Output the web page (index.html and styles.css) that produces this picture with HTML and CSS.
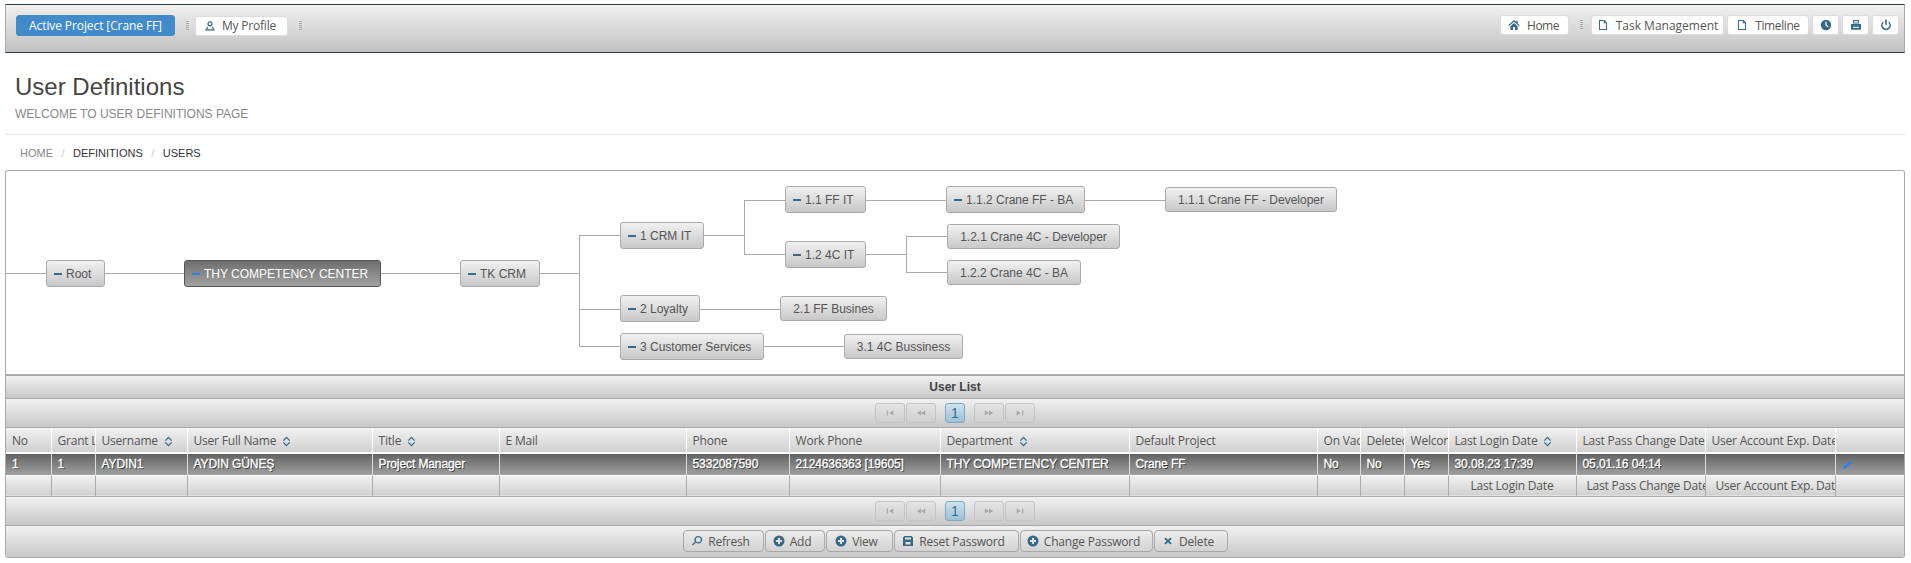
FILE: index.html
```html
<!DOCTYPE html>
<html lang="en">
<head>
    <meta charset="UTF-8">
    <meta name="viewport" content="width=device-width, initial-scale=1.0">
    <title>User Definitions</title>
    <link rel="stylesheet" href="styles.css">
</head>
<body>
    <svg class="icon-defs" aria-hidden="true">
        <symbol id="i-user" viewBox="0 0 12 12"><path d="M6 1.200a2.600 2.600 0 1 1 0 5.200 2.600 2.600 0 0 1 0-5.200zm0 1.200a1.400 1.400 0 1 0 0 2.800 1.400 1.400 0 0 0 0-2.800zM3.400 6.600 1 10.400h10L8.600 6.600l-.9.7 1.100 1.900H3.200l1.100-1.900z"/></symbol>
        <symbol id="i-home" viewBox="0 0 12 12"><path d="M6 1 .3 6.200l.8.800L6 2.800l4.900 4.200.8-.800-2-1.800V1.800H8.300v1.200zM2.400 7.200V11h2.700V8h1.800v3h2.700V7.200L6 4z"/></symbol>
        <symbol id="i-file" viewBox="0 0 12 12"><path d="M2 1h5.500L10 3.500V11H2zm1 1v8h6V4.200H6.800V2z" fill-rule="evenodd"/></symbol>
        <symbol id="i-clock" viewBox="0 0 12 12"><path d="M6 .8a5.200 5.200 0 1 1 0 10.400A5.200 5.200 0 0 1 6 .8zM5.400 2.800v3.500l2.400 2 .8-.900-2-1.700V2.800z" fill-rule="evenodd"/></symbol>
        <symbol id="i-print" viewBox="0 0 12 12"><path d="M3 1h6v3.400H3zm1 1v1.400h4V2zM1 5h10v5.800H1zm2 2.800v1h6v-1z" fill-rule="evenodd"/></symbol>
        <symbol id="i-power" viewBox="0 0 12 12"><path d="M5.200.6h1.600v5.200H5.200zM3.400 2.200v1.700a3.400 3.400 0 1 0 5.200 0V2.200a4.900 4.900 0 1 1-5.200 0z"/></symbol>
        <symbol id="i-plus" viewBox="0 0 12 12"><path d="M6 .5a5.500 5.500 0 1 1 0 11 5.500 5.500 0 0 1 0-11zM5 3v2H3v2h2v2h2V7h2V5H7V3z" fill-rule="evenodd"/></symbol>
        <symbol id="i-search" viewBox="0 0 12 12"><path d="M7.300 1a3.800 3.800 0 1 1-2.500 6.600L2 10.500 1 9.600l2.900-2.900A3.800 3.800 0 0 1 7.300 1zm0 1.300a2.500 2.500 0 1 0 0 5 2.500 2.500 0 0 0 0-5z" fill-rule="evenodd"/></symbol>
        <symbol id="i-save" viewBox="0 0 12 12"><path d="M2.500 1h7L11 2.500V11H1V2.500zM3 2.500v2h6v-2zM3.500 7v2.500h5V7z" fill-rule="evenodd"/></symbol>
        <symbol id="i-close" viewBox="0 0 12 12"><path d="M3.600 2.400 6 4.700l2.400-2.300 1.300 1.300L7.300 6l2.400 2.300-1.300 1.300L6 7.300 3.600 9.600 2.300 8.300 4.700 6 2.300 3.700z"/></symbol>
        <symbol id="i-sort" viewBox="0 0 10 12"><path d="M5 .5 9 4.500 8 5.500 5 2.500 2 5.500 1 4.500zM5 11.500 1 7.500 2 6.500 5 9.500 8 6.500 9 7.500z"/></symbol>
        <symbol id="i-pencil" viewBox="0 0 12 12"><path d="M8.500 1.500l2 2-6.800 6.800-2.800.8.800-2.800z"/></symbol>
        <symbol id="i-first" viewBox="0 0 12 12"><path d="M2 3h1.500v6H2zM10 3v6L5 6z"/></symbol>
        <symbol id="i-prev" viewBox="0 0 12 12"><path d="M6 3v6L1 6zM11 3v6L6 6z"/></symbol>
        <symbol id="i-next" viewBox="0 0 12 12"><path d="M1 3l5 3-5 3zM6 3l5 3-5 3z"/></symbol>
        <symbol id="i-last" viewBox="0 0 12 12"><path d="M2 3l5 3-5 3zM8.500 3H10v6H8.500z"/></symbol>
    </svg>

    <header class="topbar">
        <div class="topbar-group">
            <a class="tb-btn tb-active">Active Project [Crane FF]</a>
            <span class="handle"></span>
            <a class="tb-btn tb-profile"><svg class="icon"><use href="#i-user"/></svg>My Profile</a>
            <span class="handle"></span>
        </div>
        <div class="topbar-group">
            <a class="tb-btn tb-home"><svg class="icon"><use href="#i-home"/></svg>Home</a>
            <span class="handle"></span>
            <a class="tb-btn tb-task"><svg class="icon"><use href="#i-file"/></svg>Task Management</a>
            <a class="tb-btn tb-timeline"><svg class="icon"><use href="#i-file"/></svg>Timeline</a>
            <a class="tb-btn tb-square"><svg class="icon"><use href="#i-clock"/></svg></a>
            <a class="tb-btn tb-square"><svg class="icon"><use href="#i-print"/></svg></a>
            <a class="tb-btn tb-square"><svg class="icon"><use href="#i-power"/></svg></a>
        </div>
    </header>

    <section class="page-head">
        <h1>User Definitions</h1>
        <p>Welcome to User Definitions Page</p>
    </section>

    <nav class="crumbs">
        <span class="crumb-home">HOME</span><i>/</i><span>DEFINITIONS</span><i>/</i><span>USERS</span>
    </nav>

    <section class="tree-panel">
        <div class="tree">
            <svg class="tree-lines" width="1400" height="200">
                <path d="M0 102.500H574M573.500 64V176M573 64.500H615M573 138.500H615M573 175.500H615M697 64.500H739M738.500 29V84M738 29.500H780M738 83.500H780M860 29.500H1160M860 83.500H901M900.500 65V102M900 65.500H941M900 101.500H941M693 138.500H775M758 175.500H839"/>
            </svg>
            <div class="node n-root"><b class="minus"></b>Root</div>
            <div class="node selected n-thy"><b class="minus"></b>THY COMPETENCY CENTER</div>
            <div class="node n-crm"><b class="minus"></b>TK CRM</div>
            <div class="node n-1"><b class="minus"></b>1 CRM IT</div>
            <div class="node n-11"><b class="minus"></b>1.1 FF IT</div>
            <div class="node n-112"><b class="minus"></b>1.1.2 Crane FF - BA</div>
            <div class="node leaf n-111">1.1.1 Crane FF - Developer</div>
            <div class="node n-12"><b class="minus"></b>1.2 4C IT</div>
            <div class="node leaf n-121">1.2.1 Crane 4C - Developer</div>
            <div class="node leaf n-122">1.2.2 Crane 4C - BA</div>
            <div class="node n-2"><b class="minus"></b>2 Loyalty</div>
            <div class="node leaf n-21">2.1 FF Busines</div>
            <div class="node n-3"><b class="minus"></b>3 Customer Services</div>
            <div class="node leaf n-31">3.1 4C Bussiness</div>
        </div>
    </section>

    <section class="list-panel">
        <div class="list-title">User List</div>
        <div class="pager">
            <a class="pg"><svg class="icon-pg"><use href="#i-first"/></svg></a>
            <a class="pg"><svg class="icon-pg"><use href="#i-prev"/></svg></a>
            <a class="pg-num">1</a>
            <a class="pg"><svg class="icon-pg"><use href="#i-next"/></svg></a>
            <a class="pg"><svg class="icon-pg"><use href="#i-last"/></svg></a>
        </div>
        <table class="grid">
            <colgroup>
                <col class="c45"><col class="c44"><col class="c92"><col class="c185"><col class="c127"><col class="c187"><col class="c103"><col class="c151"><col class="c189"><col class="c188"><col class="c43"><col class="c44"><col class="c44"><col class="c128"><col class="c129"><col class="c130"><col>
            </colgroup>
            <thead>
                <tr>
                    <th>No</th>
                    <th>Grant Level</th>
                    <th>Username <svg class="sort"><use href="#i-sort"/></svg></th>
                    <th>User Full Name <svg class="sort"><use href="#i-sort"/></svg></th>
                    <th>Title <svg class="sort"><use href="#i-sort"/></svg></th>
                    <th>E Mail</th>
                    <th>Phone</th>
                    <th>Work Phone</th>
                    <th>Department <svg class="sort"><use href="#i-sort"/></svg></th>
                    <th>Default Project</th>
                    <th>On Vacation</th>
                    <th>Deleted</th>
                    <th>Welcome</th>
                    <th>Last Login Date <svg class="sort"><use href="#i-sort"/></svg></th>
                    <th>Last Pass Change Date</th>
                    <th>User Account Exp. Date</th>
                    <th></th>
                </tr>
            </thead>
            <tbody>
                <tr>
                    <td>1</td>
                    <td>1</td>
                    <td>AYDIN1</td>
                    <td>AYDIN GÜNEŞ</td>
                    <td>Project Manager</td>
                    <td></td>
                    <td>5332087590</td>
                    <td>2124636363 [19605]</td>
                    <td>THY COMPETENCY CENTER</td>
                    <td>Crane FF</td>
                    <td>No</td>
                    <td>No</td>
                    <td>Yes</td>
                    <td>30.08.23 17:39</td>
                    <td>05.01.16 04:14</td>
                    <td></td>
                    <td class="edit"><svg class="pencil"><use href="#i-pencil"/></svg></td>
                </tr>
            </tbody>
            <tfoot>
                <tr>
                    <td></td><td></td><td></td><td></td><td></td><td></td><td></td><td></td><td></td><td></td><td></td><td></td><td></td>
                    <td>Last Login Date</td>
                    <td>Last Pass Change Date</td>
                    <td>User Account Exp. Date</td>
                    <td></td>
                </tr>
            </tfoot>
        </table>
        <div class="pager">
            <a class="pg"><svg class="icon-pg"><use href="#i-first"/></svg></a>
            <a class="pg"><svg class="icon-pg"><use href="#i-prev"/></svg></a>
            <a class="pg-num">1</a>
            <a class="pg"><svg class="icon-pg"><use href="#i-next"/></svg></a>
            <a class="pg"><svg class="icon-pg"><use href="#i-last"/></svg></a>
        </div>
        <div class="actions">
            <button class="act a-refresh"><svg class="icon"><use href="#i-search"/></svg>Refresh</button>
            <button class="act a-add"><svg class="icon"><use href="#i-plus"/></svg>Add</button>
            <button class="act a-view"><svg class="icon"><use href="#i-plus"/></svg>View</button>
            <button class="act a-reset"><svg class="icon"><use href="#i-save"/></svg>Reset Password</button>
            <button class="act a-change"><svg class="icon"><use href="#i-plus"/></svg>Change Password</button>
            <button class="act a-delete"><svg class="icon"><use href="#i-close"/></svg>Delete</button>
        </div>
    </section>
</body>
</html>
```

FILE: styles.css
```css
html, body {
    margin: 0;
    padding: 0;
}

body {
    font-family: "Open Sans", sans-serif;
    font-size: 12px;
    color: #555;
    background: #fff;
    padding: 4px 6px 0 5px;
    overflow: hidden;
}

.icon-defs {
    position: absolute;
    width: 0;
    height: 0;
}

.icon {
    width: 12px;
    height: 12px;
    fill: #366a85;
    flex: none;
}

/* top bar */
.topbar {
    height: 49px;
    box-sizing: border-box;
    display: flex;
    align-items: flex-start;
    justify-content: space-between;
    padding: 10px 5px 0 10px;
    background: linear-gradient(to bottom, #f1f1f1, #c2c2c2);
    border-top: 1px solid #2c3e50;
    border-bottom: 1px solid #2c3e50;
    border-left: 1px solid #aaa;
    border-right: 1px solid #aaa;
}

.topbar-group {
    display: flex;
    align-items: center;
}

.tb-btn {
    height: 20px;
    box-sizing: border-box;
    display: flex;
    align-items: center;
    justify-content: center;
    gap: 7px;
    background: #fff;
    border: 1px solid #ddd;
    border-radius: 3px;
    color: #555;
    margin-left: 3px;
    letter-spacing: -0.2px;
}

.tb-active {
    width: 159px;
    height: 21px;
    margin-left: 0;
    background: #428bca;
    border-color: #428bca;
    color: #fff;
    letter-spacing: -0.1px;
}

.tb-profile { width: 93px; margin-left: 1px; padding-right: 3px; gap: 6px; }
.tb-home { width: 69px; letter-spacing: -0.5px; padding-right: 2px; }
.tb-task { width: 133px; letter-spacing: 0; }
.tb-timeline { width: 82px; letter-spacing: -0.4px; }
.tb-square { width: 27px; }

.handle {
    width: 3px;
    height: 10px;
    margin: 0 5px 0 11px;
    background: repeating-linear-gradient(to bottom, #aaa 0 1px, transparent 1px 2px);
}

/* page heading */
.page-head {
    padding: 19px 0 0 10px;
    height: 82px;
    box-sizing: border-box;
    border-bottom: 1px solid #e5e5e5;
}

.page-head h1 {
    margin: 0;
    font-family: "Liberation Sans", sans-serif;
    font-size: 24px;
    font-weight: normal;
    line-height: 30px;
    color: #444;
}

.page-head p {
    margin: 5px 0 0;
    font-family: "Liberation Sans", sans-serif;
    font-size: 12px;
    text-transform: uppercase;
    color: #888;
}

.crumbs {
    height: 35px;
    box-sizing: border-box;
    padding-left: 15px;
    display: flex;
    align-items: center;
    font-family: "Liberation Sans", sans-serif;
    font-size: 11px;
    color: #333;
}

.crumb-home {
    color: #888;
}

.crumbs i {
    font-style: normal;
    color: #ccc;
    margin: 0 8.500px;
}

/* tree */
.tree-panel {
    height: 206px;
    box-sizing: border-box;
    border: 1px solid #aaa;
    border-bottom-width: 2px;
    border-radius: 3px 3px 0 0;
    background: #fff;
}

.tree {
    position: relative;
    height: 100%;
    font-family: "Liberation Sans", sans-serif;
}

.tree-lines {
    position: absolute;
    left: 0;
    top: 0;
}

.tree-lines path {
    fill: none;
    stroke: #aaa;
    stroke-width: 1;
    shape-rendering: crispEdges;
}

.node {
    position: absolute;
    height: 27px;
    box-sizing: border-box;
    display: flex;
    align-items: center;
    padding: 0 7px;
    white-space: nowrap;
    font-size: 12px;
    color: #555;
    background: linear-gradient(to bottom, #f1f1f1, #c8c8c8);
    border: 1px solid #aaa;
    border-radius: 3px;
}

.minus {
    width: 8px;
    height: 2px;
    margin-right: 4px;
    background: #366a85;
    flex: none;
}

.leaf {
    height: 25px;
    justify-content: center;
}

.selected {
    color: #fff;
    background: linear-gradient(to bottom, #6e6e6e, #a2a2a2);
    border-color: #555;
}

.selected .minus {
    background: #2f80f0;
}

.n-root { left: 40px; top: 89px; width: 59px; }
.n-thy { left: 178px; top: 89px; width: 197px; }
.n-crm { left: 454px; top: 89px; width: 80px; }
.n-1 { left: 614px; top: 51px; width: 84px; }
.n-11 { left: 779px; top: 15px; width: 81px; }
.n-112 { left: 940px; top: 15px; width: 139px; }
.n-111 { left: 1159px; top: 16px; width: 172px; }
.n-12 { left: 779px; top: 70px; width: 81px; }
.n-121 { left: 941px; top: 53px; width: 173px; }
.n-122 { left: 941px; top: 89px; width: 134px; }
.n-2 { left: 614px; top: 124px; width: 80px; }
.n-21 { left: 774px; top: 125px; width: 107px; }
.n-3 { left: 614px; top: 162px; width: 144px; }
.n-31 { left: 838px; top: 163px; width: 119px; }

/* user list */
.list-panel {
    border: 1px solid #aaa;
    border-top: 0;
    border-radius: 0 0 3px 3px;
}

.list-title {
    height: 23px;
    line-height: 22px;
    box-sizing: border-box;
    text-align: center;
    font-family: "Liberation Sans", sans-serif;
    font-weight: bold;
    font-size: 12px;
    color: #444;
    background: linear-gradient(to bottom, #f1f1f1, #c8c8c8);
    border-bottom: 1px solid #aaa;
}

.pager {
    height: 29px;
    box-sizing: border-box;
    display: flex;
    align-items: center;
    justify-content: center;
    gap: 1px;
    background: linear-gradient(to bottom, #f1f1f1, #c8c8c8);
    border-bottom: 1px solid #aaa;
}

.pg {
    width: 30px;
    height: 20px;
    box-sizing: border-box;
    display: flex;
    align-items: center;
    justify-content: center;
    border: 1px solid #c4c4c4;
    border-radius: 3px;
    background: linear-gradient(to bottom, #e4e4e4, #cfcfcf);
}

.pg-num {
    width: 20px;
    height: 20px;
    box-sizing: border-box;
    margin: 0 8px;
    text-align: center;
    line-height: 18px;
    color: #31708f;
    font-family: "Liberation Sans", sans-serif;
    font-size: 14px;
    border: 1px solid #7fa8c1;
    border-radius: 3px;
    background: linear-gradient(to bottom, #cfe2ee, #9dbfd5);
}

.icon-pg {
    width: 10px;
    height: 10px;
    fill: #a8a8a8;
}

.grid {
    width: 100%;
    table-layout: fixed;
    border-collapse: collapse;
}

.c43 { width: 43px; }
.c44 { width: 44px; }
.c45 { width: 45px; }
.c92 { width: 92px; }
.c103 { width: 103px; }
.c127 { width: 127px; }
.c128 { width: 128px; }
.c129 { width: 129px; }
.c130 { width: 130px; }
.c151 { width: 151px; }
.c185 { width: 185px; }
.c187 { width: 187px; }
.c188 { width: 188px; }
.c189 { width: 189px; }

.grid th, .grid td {
    padding: 0 6px;
    overflow: hidden;
    white-space: nowrap;
    text-align: left;
    font-weight: normal;
    letter-spacing: -0.2px;
}

.grid th {
    height: 25px;
    background: linear-gradient(to bottom, #f1f1f1, #d0d0d0);
    border: 1px solid #fff;
    border-top: 0;
    border-bottom-width: 2px;
    box-sizing: border-box;
    color: #555;
}

.grid th:first-child, .grid td:first-child { border-left: 0; }
.grid th:last-child, .grid td:last-child { border-right: 0; }

.sort {
    width: 9px;
    height: 11px;
    margin-left: 3px;
    vertical-align: -2px;
    fill: #366a85;
}

.grid tbody td {
    height: 22px;
    box-sizing: border-box;
    padding: 0 6px;
    font-family: "Liberation Sans", sans-serif;
    letter-spacing: -0.1px;
    color: #fff;
    text-shadow: 1px 1px 0 #333;
    -webkit-text-stroke: 0.3px #fff;
    background: linear-gradient(to bottom, #626262, #a0a0a0);
    border-left: 1px solid #ddd;
    border-right: 1px solid #ddd;
}

.edit {
    text-align: center;
}

.pencil {
    width: 11px;
    height: 11px;
    fill: #2f80f0;
    display: block;
}

.grid tfoot td {
    height: 21px;
    box-sizing: border-box;
    padding: 0 10px;
    text-align: center;
    background: linear-gradient(to bottom, #f1f1f1, #d0d0d0);
    border: 1px solid #aaa;
    border-top: 1px solid #fff;
}

.actions {
    height: 31px;
    box-sizing: border-box;
    display: flex;
    align-items: center;
    justify-content: center;
    gap: 1px;
    background: linear-gradient(to bottom, #f1f1f1, #c8c8c8);
}

.act {
    height: 22px;
    box-sizing: border-box;
    display: flex;
    align-items: center;
    justify-content: center;
    gap: 5px;
    padding: 0 5px 0 0;
    font-family: "Open Sans", sans-serif;
    font-size: 12px;
    letter-spacing: -0.2px;
    color: #555;
    background: linear-gradient(to bottom, #ececec, #d2d2d2);
    border: 1px solid #a8a8a8;
    border-radius: 4px;
}

.a-refresh { width: 81px; }
.a-add { width: 60px; }
.a-view { width: 67px; }
.a-reset { width: 125px; }
.a-change { width: 133px; }
.a-delete { width: 74px; }
```
